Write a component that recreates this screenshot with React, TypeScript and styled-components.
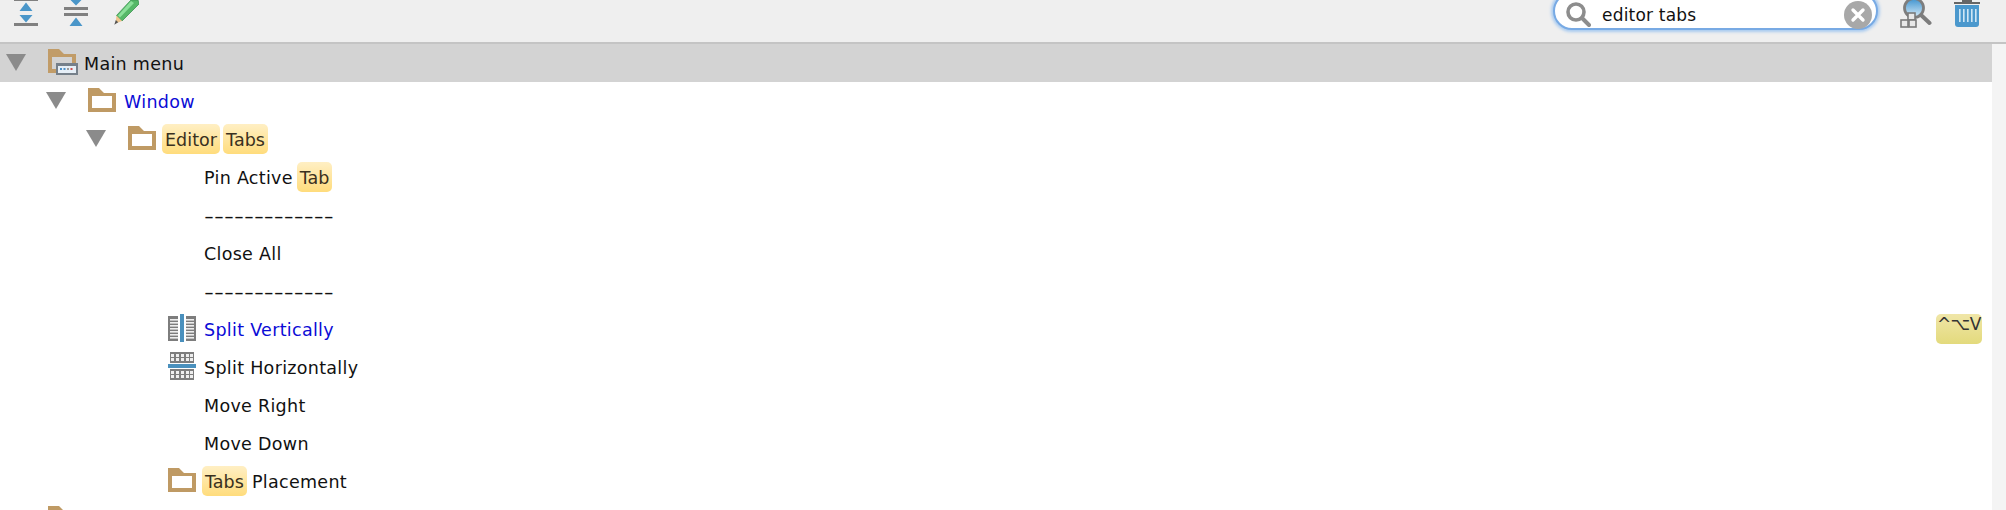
import React from "react";
import styled, { createGlobalStyle } from "styled-components";

const GlobalStyle = createGlobalStyle`
  html, body {
    margin: 0;
    padding: 0;
    height: 510px;
    overflow: hidden;
    background: #f4f4f4;
    font-family: "DejaVu Sans", "Liberation Sans", sans-serif;
  }
`;

const Page = styled.div`
  height: 510px;
  overflow: hidden;
  display: flex;
  flex-direction: column;
`;

const Toolbar = styled.div`
  height: 42px;
  flex: none;
  display: flex;
  align-items: flex-start;
  justify-content: space-between;
  background: #efefef;
  border-bottom: 2px solid #c4c4c4;
  overflow: hidden;
`;

const ToolGroup = styled.div<{ $right?: number }>`
  display: flex;
  align-items: flex-start;
  padding-right: ${(p) => p.$right ?? 0}px;
`;

const ToolIcon = styled.svg<{ $left?: number }>`
  display: block;
  flex: none;
  margin-left: ${(p) => p.$left ?? 0}px;
`;

const SearchBox = styled.div`
  width: 325px;
  height: 38px;
  margin: -8px 1px 0;
  box-sizing: border-box;
  border-radius: 19px;
  background: #fff;
  border: 2px solid #78aae4;
  box-shadow: 0 0 3px 2px #a9cbf0;
  display: flex;
  align-items: center;
  padding: 8px 4px 0 11px;
`;

const SearchText = styled.span`
  flex: 1;
  margin-left: 11px;
  font-size: 17px;
  color: #111;
  letter-spacing: 0.2px;
`;

const SearchGlyphIcon = styled.svg`
  flex: none;
`;

const Tree = styled.div`
  flex: 1;
  width: 1992px;
  background: #fff;
`;

const Row = styled.div<{ $depth: number; $selected?: boolean }>`
  height: 38px;
  display: flex;
  align-items: center;
  box-sizing: border-box;
  padding-left: ${(p) => 6 + p.$depth * 40}px;
  padding-right: 10px;
  background: ${(p) => (p.$selected ? "#d3d3d3" : "#fff")};
  font-size: 17.5px;
  letter-spacing: 0.3px;
  white-space: pre;
`;

const Arrow = styled.span<{ $open?: boolean }>`
  width: 20px;
  height: 17px;
  flex: none;
  margin-right: 22px;
  margin-top: -1px;
  background: ${(p) => (p.$open ? "#8b8b8b" : "transparent")};
  clip-path: polygon(0 0, 100% 0, 50% 100%);
`;

const IconSlot = styled.span<{ $peek?: boolean }>`
  width: 31px;
  height: 32px;
  flex: none;
  margin-right: 5px;
  display: flex;
  align-items: ${(p) => (p.$peek ? "flex-start" : "center")};
  padding-bottom: ${(p) => (p.$peek ? 0 : 2)}px;
  box-sizing: border-box;
  align-self: ${(p) => (p.$peek ? "flex-start" : "center")};
  margin-top: ${(p) => (p.$peek ? 6 : 0)}px;
`;

const Label = styled.span<{ $modified?: boolean }>`
  height: 38px;
  line-height: 40px;
  color: ${(p) => (p.$modified ? "#0b0bd6" : "#111")};
`;

const Rule = styled.span`
  display: inline-block;
  height: 38px;
  line-height: 40px;
  color: #111;
  letter-spacing: 0;
  transform: scaleX(1.58);
  transform-origin: left center;
`;

const Match = styled.span`
  display: inline-block;
  vertical-align: top;
  height: 30px;
  margin: 4px 5px 0 -2px;
  padding: 0 3px;
  line-height: 32px;
  letter-spacing: 0.05px;
  border-radius: 5px;
  background: linear-gradient(#ffefc4, #ffdc7c);
  color: #3a3020;
`;

const Shortcut = styled.span`
  margin-left: auto;
  width: 46px;
  height: 30px;
  box-sizing: border-box;
  border-radius: 5px;
  background: linear-gradient(#f0e6a8, #e3da7c);
  color: #333;
  font-size: 17px;
  line-height: 20px;
  text-align: center;
  overflow: hidden;
  letter-spacing: -0.5px;
`;

const Folder = () => (
  <svg width="28" height="24" viewBox="0 0 28 24">
    <path fillRule="evenodd" fill="#bf9a64" d="M0 0H11L16 5H28V24H0ZM4 8V20H24V8Z" />
  </svg>
);

const MenuFolder = () => (
  <svg width="31" height="27" viewBox="0 0 31 27">
    <path fillRule="evenodd" fill="#c19c68" d="M0 0H11L16 5H28V14H8V24H0ZM4 8V20H8V14H24V8Z" />
    <rect x="8" y="14" width="22" height="12" fill="#76808a" />
    <rect x="10" y="17" width="18" height="7" fill="#e6eff7" />
    <rect x="12" y="19" width="2" height="2" fill="#4d90c8" />
    <rect x="15.5" y="19" width="2" height="2" fill="#4d90c8" />
    <rect x="19" y="19" width="2" height="2" fill="#9a9a9a" />
    <rect x="22.5" y="19" width="2" height="2" fill="#d05050" />
  </svg>
);

const SplitVertical = () => (
  <svg width="28" height="28" viewBox="0 0 28 28">
    <rect x="0" y="2" width="28" height="25" fill="#7d7d7d" />
    {[5, 8, 11, 14, 17, 20, 23].map((y) => (
      <g key={y} fill="#eee">
        <rect x="2" y={y} width="8" height="1.6" />
        <rect x="18" y={y} width="8" height="1.6" />
      </g>
    ))}
    <rect x="10" y="2" width="2" height="25" fill="#fff" />
    <rect x="16" y="2" width="2" height="25" fill="#fff" />
    <rect x="12" y="0" width="4" height="28" fill="#4a90bd" />
  </svg>
);

const SplitHorizontal = () => (
  <svg width="28" height="28" viewBox="0 0 28 28">
    <rect x="2" y="0" width="24" height="11" fill="#7d7d7d" />
    <rect x="2" y="17" width="24" height="11" fill="#7d7d7d" />
    {[2, 7, 12, 17, 21].map((x) => (
      <g key={x} fill="#eee">
        <rect x={x + 1} y="2" width="3" height="3" />
        <rect x={x + 1} y="6" width="3" height="3" />
        <rect x={x + 1} y="19" width="3" height="3" />
        <rect x={x + 1} y="23" width="3" height="3" />
      </g>
    ))}
    <rect x="0" y="12" width="28" height="4" fill="#4a90bd" />
  </svg>
);

const Expand = () => (
  <ToolIcon $left={14} width="24" height="27" viewBox="0 0 24 27">
    <rect width="24" height="1" fill="#808080" />
    <path fill="#4a96c9" d="M12 2.5L18.5 11H5.5ZM5.5 15H18.5L12 22.5Z" />
    <rect y="23" width="24" height="3" fill="#808080" />
  </ToolIcon>
);

const Collapse = () => (
  <ToolIcon $left={26} width="24" height="27" viewBox="0 0 24 27">
    <path fill="#4a96c9" d="M6.5 0H17.5L12 5.5ZM12 17.5L18.5 26H5.5Z" />
    <rect y="7" width="24" height="3" fill="#808080" />
    <rect y="13" width="24" height="3" fill="#808080" />
  </ToolIcon>
);

const Pencil = () => (
  <ToolIcon $left={26} width="25" height="25" viewBox="0 0 25 25">
    <path fill="#56b868" stroke="#3b9350" strokeWidth="0.8" d="M17 0H24L25 4L8 21L2.5 15.5Z" />
    <path fill="#8be09a" d="M17 1L20 3L6 17.5L4 15.5Z" />
    <path fill="#eec58d" d="M2.5 15.5L8 21L1.5 23.5Z" />
    <path fill="#555" d="M1.8 20L4.2 22.2L0.3 24.7Z" />
  </ToolIcon>
);

const SearchGlyph = () => (
  <SearchGlyphIcon width="25" height="26" viewBox="0 0 25 26">
    <circle cx="10" cy="10" r="8" fill="none" stroke="#8d8d8d" strokeWidth="3.6" />
    <path stroke="#8d8d8d" strokeWidth="4" strokeLinecap="round" d="M16 16L23 23" />
  </SearchGlyphIcon>
);

const ClearGlyph = () => (
  <SearchGlyphIcon width="28" height="28" viewBox="0 0 28 28">
    <circle cx="14" cy="14" r="14" fill="#a8a8a8" />
    <path stroke="#fff" strokeWidth="3.4" strokeLinecap="round" d="M9 9L19 19M19 9L9 19" />
  </SearchGlyphIcon>
);

const FindAction = () => (
  <ToolIcon $left={21} width="32" height="28" viewBox="0 0 32 28">
    <defs>
      <linearGradient id="lens" x1="0" y1="0" x2="0" y2="1">
        <stop offset="0" stopColor="#3f93cf" />
        <stop offset="1" stopColor="#d8ecf8" />
      </linearGradient>
    </defs>
    <circle cx="14" cy="8" r="9.5" fill="url(#lens)" stroke="#7d7d7d" strokeWidth="2.8" />
    <path stroke="#7d7d7d" strokeWidth="4" strokeLinecap="round" d="M21 15L29.5 23" />
    <g fill="#e8e8e8" stroke="#7a7a7a" strokeWidth="1.6">
      <rect x="8" y="13" width="7" height="7" />
      <rect x="1" y="20" width="7" height="7" />
      <rect x="9" y="20" width="7" height="7" />
    </g>
  </ToolIcon>
);

const Trash = () => (
  <ToolIcon $left={22} width="26" height="27" viewBox="0 0 26 27">
    <rect x="0" y="2" width="26" height="2" fill="#666" />
    <rect x="8" y="0" width="10" height="2" fill="#666" />
    <path fill="#4b98cd" d="M1 5H25V24Q25 27 22 27H4Q1 27 1 24Z" />
    {[5, 9, 13, 17, 21].map((x) => (
      <rect key={x} x={x} y="9" width="1.6" height="13" fill="#cfe6f5" />
    ))}
  </ToolIcon>
);

const Dashes = "-------------";

export default function App() {
  return (
    <Page>
      <GlobalStyle />
      <Toolbar>
        <ToolGroup>
          <Expand />
          <Collapse />
          <Pencil />
        </ToolGroup>
        <ToolGroup $right={26}>
          <SearchBox>
            <SearchGlyph />
            <SearchText>editor tabs</SearchText>
            <ClearGlyph />
          </SearchBox>
          <FindAction />
          <Trash />
        </ToolGroup>
      </Toolbar>
      <Tree>
        <Row $depth={0} $selected>
          <Arrow $open />
          <IconSlot>
            <MenuFolder />
          </IconSlot>
          <Label>Main menu</Label>
        </Row>
        <Row $depth={1}>
          <Arrow $open />
          <IconSlot>
            <Folder />
          </IconSlot>
          <Label $modified>Window</Label>
        </Row>
        <Row $depth={2}>
          <Arrow $open />
          <IconSlot>
            <Folder />
          </IconSlot>
          <Label>
            <Match>Editor</Match>
            <Match>Tabs</Match>
          </Label>
        </Row>
        <Row $depth={3}>
          <Arrow />
          <IconSlot />
          <Label>
            Pin Active <Match>Tab</Match>
          </Label>
        </Row>
        <Row $depth={3}>
          <Arrow />
          <IconSlot />
          <Rule>{Dashes}</Rule>
        </Row>
        <Row $depth={3}>
          <Arrow />
          <IconSlot />
          <Label>Close All</Label>
        </Row>
        <Row $depth={3}>
          <Arrow />
          <IconSlot />
          <Rule>{Dashes}</Rule>
        </Row>
        <Row $depth={3}>
          <Arrow />
          <IconSlot>
            <SplitVertical />
          </IconSlot>
          <Label $modified>Split Vertically</Label>
          <Shortcut>^⌥V</Shortcut>
        </Row>
        <Row $depth={3}>
          <Arrow />
          <IconSlot>
            <SplitHorizontal />
          </IconSlot>
          <Label>Split Horizontally</Label>
        </Row>
        <Row $depth={3}>
          <Arrow />
          <IconSlot />
          <Label>Move Right</Label>
        </Row>
        <Row $depth={3}>
          <Arrow />
          <IconSlot />
          <Label>Move Down</Label>
        </Row>
        <Row $depth={3}>
          <Arrow />
          <IconSlot>
            <Folder />
          </IconSlot>
          <Label>
            <Match>Tabs</Match>Placement
          </Label>
        </Row>
        <Row $depth={0}>
          <Arrow />
          <IconSlot $peek>
            <Folder />
          </IconSlot>
        </Row>
      </Tree>
    </Page>
  );
}
